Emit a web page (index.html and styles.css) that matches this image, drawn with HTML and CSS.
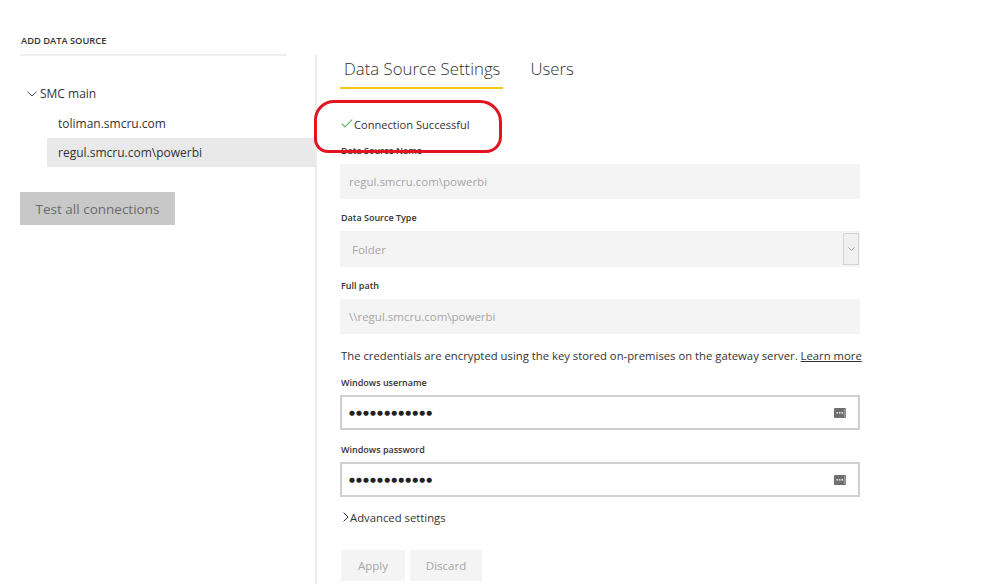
FILE: index.html
```html
<!DOCTYPE html>
<html>
<head>
<meta charset="utf-8">
<link rel="stylesheet" href="styles.css">
</head>
<body>
<div class="page">
  <aside class="sidebar">
    <div class="side-title">ADD DATA SOURCE</div>
    <div class="tree">
      <div class="tree-root">
        <svg class="chev-down" width="10" height="6" viewBox="0 0 10 6"><path d="M0.5 0.5 L5 5 L9.5 0.5" fill="none" stroke="#444" stroke-width="1"/></svg>
        <span>SMC main</span>
      </div>
      <div class="tree-item">toliman.smcru.com</div>
      <div class="tree-item selected">regul.smcru.com\powerbi</div>
    </div>
    <button class="test-btn">Test all connections</button>
  </aside>
  <main class="main">
    <div class="tabs">
      <div class="tab active">Data Source Settings</div>
      <div class="tab">Users</div>
    </div>
    <div class="status">
      <svg class="check" width="12" height="9" viewBox="0 0 12 9"><path d="M0.8 4.6 L4 7.8 L11.2 0.6" fill="none" stroke="#5cb85c" stroke-width="1.2"/></svg>
      <span>Connection Successful</span>
    </div>
    <div class="label first">Data Source Name</div>
    <div class="field readonly">regul.smcru.com\powerbi</div>
    <div class="label">Data Source Type</div>
    <div class="field readonly select">
      <span>Folder</span>
      <span class="select-arrow"><svg width="7" height="4" viewBox="0 0 7 4"><path d="M0.5 0.5 L3.5 3.3 L6.5 0.5" fill="none" stroke="#9a9a9a" stroke-width="1"/></svg></span>
    </div>
    <div class="label">Full path</div>
    <div class="field readonly">\\regul.smcru.com\powerbi</div>
    <p class="note">The credentials are encrypted using the key stored on-premises on the gateway server. <a class="learn">Learn more</a></p>
    <div class="label">Windows username</div>
    <div class="field pw">
      <span class="dots">●●●●●●●●●●●●</span>
      <svg class="key" width="12" height="10" viewBox="0 0 12 10"><rect x="0" y="0" width="12" height="10" rx="1" fill="#6f6f6f"/><rect x="10" y="1" width="1.5" height="8" fill="#a0a0a0"/><rect x="2.5" y="4" width="1.5" height="1.6" fill="#e4e4e4"/><rect x="5" y="4" width="1.5" height="1.6" fill="#e4e4e4"/><rect x="7.5" y="4" width="1.5" height="1.6" fill="#e4e4e4"/></svg>
    </div>
    <div class="label pw-label">Windows password</div>
    <div class="field pw">
      <span class="dots">●●●●●●●●●●●●</span>
      <svg class="key" width="12" height="10" viewBox="0 0 12 10"><rect x="0" y="0" width="12" height="10" rx="1" fill="#6f6f6f"/><rect x="10" y="1" width="1.5" height="8" fill="#a0a0a0"/><rect x="2.5" y="4" width="1.5" height="1.6" fill="#e4e4e4"/><rect x="5" y="4" width="1.5" height="1.6" fill="#e4e4e4"/><rect x="7.5" y="4" width="1.5" height="1.6" fill="#e4e4e4"/></svg>
    </div>
    <div class="advanced">
      <svg class="chev-right" width="6" height="10" viewBox="0 0 6 10"><path d="M0.6 0.6 L5 5 L0.6 9.4" fill="none" stroke="#333" stroke-width="1"/></svg>
      <span>Advanced settings</span>
    </div>
    <div class="actions">
      <button class="btn">Apply</button>
      <button class="btn discard">Discard</button>
    </div>
    <div class="annotation"></div>
  </main>
</div>
</body>
</html>
```

FILE: styles.css
```css
* { box-sizing: border-box; }
html, body { margin: 0; padding: 0; background: #fff; }
body {
  font-family: "Open Sans", "Noto Sans", sans-serif;
  color: #333;
  width: 998px;
  height: 584px;
  overflow: hidden;
}
.page { display: flex; height: 584px; }

.sidebar { width: 315px; padding-left: 20px; flex: none; }
.side-title {
  width: 267px;
  padding-top: 35px;
  padding-left: 1px;
  height: 56px;
  font-size: 9.3px;
  font-weight: 600;
  color: #333;
  line-height: 12px;
  border-bottom: 2px solid #eeeeee;
}
.tree { margin-top: 27px; }
.tree-root {
  display: flex;
  align-items: center;
  height: 20px;
  font-size: 12px;
  padding-left: 7px;
}
.chev-down { margin-right: 3px; margin-top: 2px; }
.tree-item {
  height: 29px;
  line-height: 29px;
  margin-left: 27px;
  padding-left: 11px;
  font-size: 12px;
}
.tree-root + .tree-item { margin-top: 6px; }
.tree-item.selected { background: #e9e9e9; }
.test-btn {
  margin-top: 25px;
  width: 155px;
  height: 33px;
  border: none;
  background: #c8c8c8;
  color: #6b6b6b;
  font-family: inherit;
  font-size: 13.5px;
  padding: 0;
}

.main {
  position: relative;
  margin-top: 55px;
  border-left: 2px solid #ececec;
  padding-left: 23px;
  width: 570px;
  flex: none;
}
.tabs { display: flex; gap: 23px; padding-top: 2px; }
.tab {
  font-size: 16.8px;
  font-weight: 300;
  color: #333;
  line-height: 24px;
  padding: 0 3px 6px 4px;
  border-bottom: 2px solid transparent;
}
.tab.active { border-bottom-color: #f2c811; }
.status {
  margin-top: 27px;
  display: flex;
  align-items: center;
  height: 16px;
  font-size: 11.1px;
  padding-left: 1px;
}
.check { margin-right: 1px; margin-top: -2px; }
.label {
  font-size: 9px;
  font-weight: 600;
  color: #333;
  line-height: 14px;
  margin-top: 12px;
  padding-left: 1px;
}
.label.pw-label { margin-top: 13px; }
.field {
  width: 520px;
  height: 35px;
  margin-top: 6px;
  display: flex;
  align-items: center;
  padding-left: 9px;
  font-size: 11.5px;
}
.field.readonly { background: #f4f4f4; color: #a6a6a6; }
.field.select { height: 36px; justify-content: space-between; padding-right: 1px; }
.field.select span:first-child { padding-left: 3px; }
.select-arrow {
  width: 16px;
  height: 32px;
  border: 1px solid #d4d4d4;
  background: #f0f0f0;
  display: flex;
  align-items: center;
  justify-content: center;
}
.note {
  margin: 14px 0 0 0;
  font-size: 11.3px;
  line-height: 16px;
  white-space: nowrap;
  padding-left: 1px;
}
.learn { color: #333; text-decoration: underline; }
.field.pw {
  margin-top: 5px;
  border: 2px solid #d0d0d0;
  background: #fff;
  justify-content: space-between;
  padding-left: 7px;
  padding-right: 12px;
}
.dots {
  font-family: "DejaVu Sans", sans-serif;
  font-size: 6.8px;
  letter-spacing: 1.1px;
  color: #222;
}
.advanced {
  margin-top: 12px;
  display: flex;
  align-items: center;
  height: 16px;
  font-size: 11.3px;
  padding-left: 3px;
}
.chev-right { margin-right: 1px; }
.actions { margin-top: 25px; display: flex; gap: 5px; padding-left: 1px; }
.btn {
  height: 31px;
  border: none;
  background: #f4f4f4;
  color: #a6a6a6;
  font-family: inherit;
  font-size: 11.5px;
  padding: 0;
  width: 64px;
}
.btn.discard { width: 72px; }
.annotation {
  position: absolute;
  left: -3px;
  top: 45px;
  width: 188px;
  height: 53px;
  border: 3px solid #e3141f;
  border-radius: 20px 22px 16px 14px;
  pointer-events: none;
}
```
